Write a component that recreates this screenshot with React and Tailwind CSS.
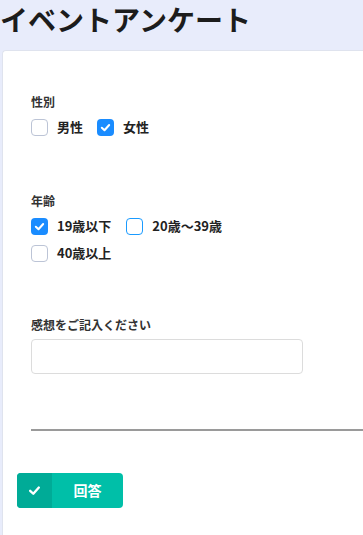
import React, { useState } from "react";

const font = { fontFamily: '"Noto Sans CJK JP", "Noto Sans", sans-serif' };

const CheckMark = ({ size = 11 }) => (
  <svg width={size} height={size} viewBox="0 0 12 12" fill="none">
    <path d="M2 6.3 L4.9 9 L10 3.3" stroke="white" strokeWidth="2.2" strokeLinecap="round" strokeLinejoin="round" />
  </svg>
);

const Checkbox = ({ label, checked, focused, onToggle }) => (
  <label className="flex items-center gap-[9px] cursor-pointer" onClick={onToggle}>
    <span
      className={
        checked
          ? "w-[17px] h-[17px] rounded-[4px] bg-[#1a8cff] flex items-center justify-center"
          : focused
          ? "w-[17px] h-[17px] rounded-[4px] border-[1.5px] border-[#1a9bff] bg-white"
          : "w-[17px] h-[17px] rounded-[4px] border border-[#bcc4d6] bg-white"
      }
    >
      {checked && <CheckMark />}
    </span>
    <span className="text-[13px] leading-[18px] font-bold text-[#222]">{label}</span>
  </label>
);

const App = () => {
  const [gender, setGender] = useState({ male: false, female: true });
  const [age, setAge] = useState({ a: true, b: false, c: false });

  return (
    <div className="min-h-[535px] bg-[#e8ecfb] flex flex-col" style={font}>
      {/* Header */}
      <h1 className="h-[50px] pt-[2px] text-[28px] leading-[34px] font-bold text-[#1c1c1c]">
        イベントアンケート
      </h1>

      {/* Card */}
      <div className="flex-1 ml-[2px] bg-white rounded-tl-[4px] border-l border-t border-[#dfe3ee] pt-[43px] pb-[26px]">
        <div className="pl-[28px] flex flex-col">
          <div className="text-[12px] leading-[16px] font-bold text-[#333]">性別</div>
          <div className="flex gap-x-[14px] mt-[8px]">
            <Checkbox
              label="男性"
              checked={gender.male}
              onToggle={() => setGender(g => ({ ...g, male: !g.male }))}
            />
            <Checkbox
              label="女性"
              checked={gender.female}
              onToggle={() => setGender(g => ({ ...g, female: !g.female }))}
            />
          </div>

          <div className="text-[12px] leading-[16px] font-bold text-[#333] mt-[57px]">年齢</div>
          <div className="flex flex-wrap w-[220px] gap-x-[15px] gap-y-[9px] mt-[8px]">
            <Checkbox label="19歳以下" checked={age.a} onToggle={() => setAge(s => ({ ...s, a: !s.a }))} />
            <Checkbox label="20歳〜39歳" checked={age.b} focused onToggle={() => setAge(s => ({ ...s, b: !s.b }))} />
            <Checkbox label="40歳以上" checked={age.c} onToggle={() => setAge(s => ({ ...s, c: !s.c }))} />
          </div>

          <div className="text-[12px] leading-[16px] font-bold text-[#333] mt-[55px]">感想をご記入ください</div>
          <input
            type="text"
            className="mt-[6px] w-[272px] h-[35px] rounded-[4px] border border-[#dcdcdc] outline-none px-2 text-[13px]"
          />
        </div>

        <hr className="ml-[28px] mt-[55px] border-0 border-t-2 border-[#9a9a9a]" />

        <button className="ml-[14px] mt-[42px] w-[106px] h-[35px] rounded-[4px] bg-[#00bfa8] flex items-stretch overflow-hidden text-white">
          <span className="w-[35px] bg-[#00ab97] flex items-center justify-center">
            <CheckMark size={13} />
          </span>
          <span className="flex-1 flex items-center justify-center text-[14px] font-bold">回答</span>
        </button>
      </div>
    </div>
  );
};

export default App;
